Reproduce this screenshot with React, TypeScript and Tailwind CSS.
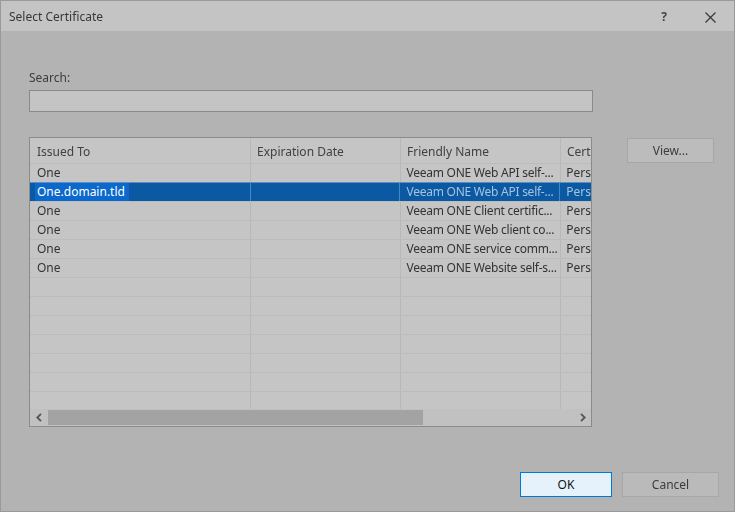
import React from "react";

type Row = { issued: string; expires: string; friendly: string; cert: string; selected?: boolean };

const rows: Row[] = [
  { issued: "One", expires: "", friendly: "Veeam ONE Web API self-...", cert: "Pers" },
  { issued: "One.domain.tld", expires: "", friendly: "Veeam ONE Web API self-...", cert: "Pers", selected: true },
  { issued: "One", expires: "", friendly: "Veeam ONE Client certific...", cert: "Pers" },
  { issued: "One", expires: "", friendly: "Veeam ONE Web client co...", cert: "Pers" },
  { issued: "One", expires: "", friendly: "Veeam ONE service comm...", cert: "Pers" },
  { issued: "One", expires: "", friendly: "Veeam ONE Website self-s...", cert: "Pers" },
];

const emptyRows = Array.from({ length: 8 });

function CloseIcon() {
  return (
    <svg width="11" height="11" viewBox="0 0 11 11" className="blur-[0.6px]">
      <path d="M0.5 0.5 L10.5 10.5 M10.5 0.5 L0.5 10.5" stroke="#3a3a3a" strokeWidth="1.3" />
    </svg>
  );
}

function Chevron({ dir }: { dir: "left" | "right" }) {
  return (
    <svg width="6" height="9" viewBox="0 0 6 9" className="blur-[0.5px]">
      {dir === "left" ? (
        <path d="M5 0.8 L1.3 4.5 L5 8.2" fill="none" stroke="#555" strokeWidth="1.8" />
      ) : (
        <path d="M1 0.8 L4.7 4.5 L1 8.2" fill="none" stroke="#555" strokeWidth="1.8" />
      )}
    </svg>
  );
}

export default function App() {
  return (
    <div className="w-[735px] h-[512px] bg-[#b3b3b3] border border-[#999999] flex flex-col font-['Noto_Sans',sans-serif] text-[12px] text-[#3a3a3a] overflow-hidden">
      {/* title bar */}
      <div className="h-[30px] shrink-0 bg-[#c4c4c4] flex items-center pl-[8px] pt-[2px]">
        <span className="blur-[0.7px] text-[#383838]">Select Certificate</span>
        <div className="ml-auto flex items-center">
          <span className="w-[46px] text-center font-bold text-[12px] text-[#444] blur-[0.6px]">?</span>
          <span className="w-[46px] flex justify-center mr-[1px]">
            <CloseIcon />
          </span>
        </div>
      </div>

      {/* body */}
      <div className="flex-1 flex flex-col pl-[28px]">
        <div className="pt-[39px] leading-[16px] text-[#3c3c3c] blur-[0.7px]">Search:</div>
        <div className="mt-[4px] w-[564px] h-[22px] border border-[#8a8a8a] bg-[#c4c4c4] blur-[0.5px]" />

        <div className="mt-[25px] flex items-start">
          {/* certificate list */}
          <div className="w-[563px] h-[290px] border border-[#8b8b8b] bg-[#c5c5c5] flex flex-col overflow-hidden">
            <div className="relative flex-1 overflow-hidden">
              {/* column separators */}
              <div className="absolute inset-0 flex pointer-events-none">
                <div className="w-[221px] border-r border-[#b8b8b8]" />
                <div className="w-[150px] border-r border-[#b8b8b8]" />
                <div className="w-[160px] border-r border-[#b8b8b8]" />
              </div>

              <div className="relative flex h-[25px] pt-[2px] items-center text-[#414141] blur-[0.7px] whitespace-nowrap">
                <div className="w-[221px] pl-[7px]">Issued To</div>
                <div className="w-[150px] pl-[6px]">Expiration Date</div>
                <div className="w-[160px] pl-[6px]">Friendly Name</div>
                <div className="pl-[6px]">Cert</div>
              </div>

              {rows.map((r, i) =>
                r.selected ? (
                  <div key={i} className="relative flex h-[19px] items-center bg-[#0a59a2] border-t border-[#5b8fc4] whitespace-nowrap">
                    <div className="w-[221px] h-full pl-[5px] flex items-center border-r border-[#4a86c0]">
                      <span className="h-[18px] pl-[2px] pr-[4px] bg-[#0b68cc] text-white leading-[18px]">{r.issued}</span>
                    </div>
                    <div className="w-[150px] h-full border-r border-[#4a86c0]" />
                    <div className="w-[160px] h-full pl-[6px] flex items-center border-r border-[#4a86c0] text-[#a7c2dd] blur-[0.7px] tracking-[-0.25px]">
                      {r.friendly}
                    </div>
                    <div className="pl-[6px] text-[#a7c2dd] blur-[0.7px]">{r.cert}</div>
                  </div>
                ) : (
                  <div key={i} className="relative flex h-[19px] items-center border-t border-[#bcbcbc] whitespace-nowrap text-[#333] blur-[0.7px]">
                    <div className="w-[221px] pl-[7px]">{r.issued}</div>
                    <div className="w-[150px] pl-[6px]">{r.expires}</div>
                    <div className="w-[160px] pl-[6px] tracking-[-0.25px]">{r.friendly}</div>
                    <div className="pl-[6px]">{r.cert}</div>
                  </div>
                )
              )}
              {emptyRows.map((_, i) => (
                <div key={`e${i}`} className="relative h-[19px] border-t border-[#bcbcbc]" />
              ))}
            </div>

            {/* horizontal scrollbar */}
            <div className="h-[17px] shrink-0 flex items-center bg-[#c1c1c1]">
              <div className="w-[18px] flex justify-center">
                <Chevron dir="left" />
              </div>
              <div className="w-[375px] h-[15px] bg-[#a3a3a3] blur-[0.4px]" />
              <div className="ml-auto w-[17px] flex justify-center">
                <Chevron dir="right" />
              </div>
            </div>
          </div>

          <button className="ml-[35px] mt-[1px] w-[87px] h-[25px] border border-[#a6a6a6] bg-[#bcbcbc] text-[#3c3c3c] blur-[0.5px]">
            View...
          </button>
        </div>

        <div className="mt-auto mb-[14px] mr-[15px] flex justify-end gap-[10px]">
          <button className="w-[92px] h-[25px] border border-[#0078d7] bg-[#e5f1fb] text-[#111]">OK</button>
          <button className="w-[97px] h-[25px] border border-[#a7a7a7] bg-[#bababa] text-[#3c3c3c] blur-[0.5px]">
            Cancel
          </button>
        </div>
      </div>
    </div>
  );
}
